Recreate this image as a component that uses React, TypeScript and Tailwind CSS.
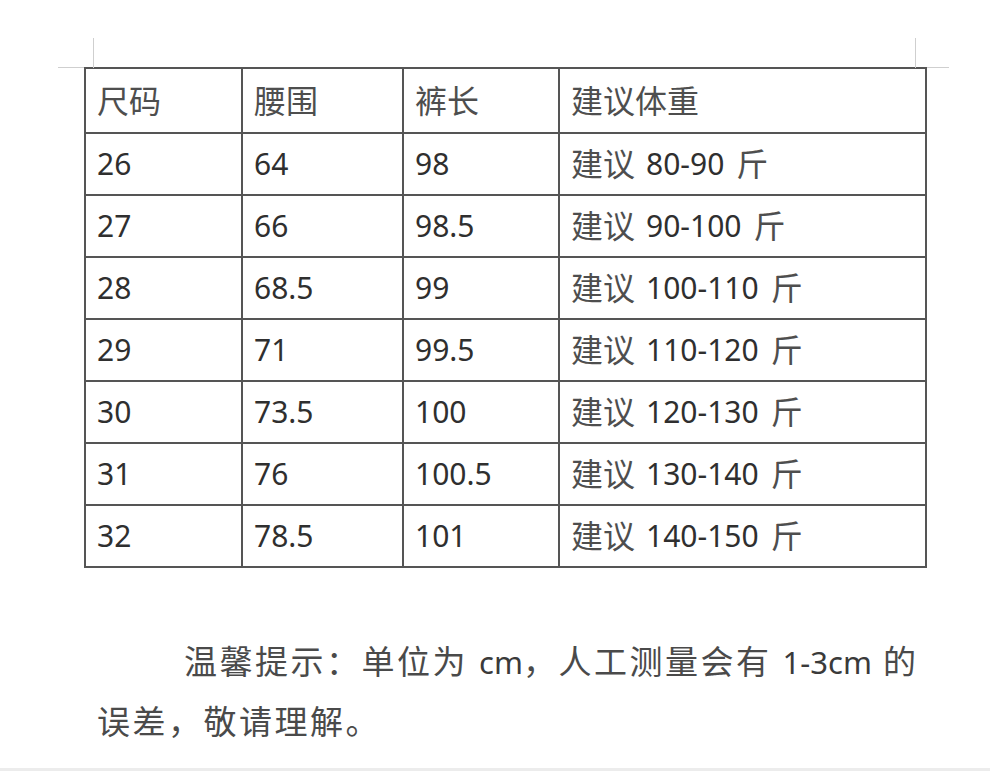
import React from "react";

const FONT = { fontFamily: '"Noto Sans", "Noto Sans CJK SC", sans-serif' };

// size chart rows: size, waist, length, weight range
const HEAD = ["尺码", "腰围", "裤长", "建议体重"];
const ROWS: [string, string, string, string][] = [
    ["26", "64", "98", "80-90"],
    ["27", "66", "98.5", "90-100"],
    ["28", "68.5", "99", "100-110"],
    ["29", "71", "99.5", "110-120"],
    ["30", "73.5", "100", "120-130"],
    ["31", "76", "100.5", "130-140"],
    ["32", "78.5", "101", "140-150"],
];

const COLS = ["w-[157px]", "w-[161px]", "w-[156px]", "w-[367px]"];

function Cjk({ children }: { children: string }) {
    return <span className="text-[32px] text-[#4e4e4e]">{children}</span>;
}

function Cell({ col, tall, children }: { col: number; tall?: boolean; children: React.ReactNode }) {
    return (
        <div
            className={`${COLS[col]} ${tall ? "h-[65px]" : "h-[62px]"} flex items-center border-b-2 border-r-2 border-[#555] pl-[11px] text-[30px] leading-none text-[#2f2f2f]`}
        >
            {children}
        </div>
    );
}

export default function App() {
    return (
        <div className="relative flex h-[771px] w-[990px] flex-col overflow-hidden bg-white" style={FONT}>
            {/* crop marks */}
            <div className="absolute left-[93px] top-[38px] h-[30px] w-px bg-[#cfcfcf]" />
            <div className="absolute left-[58px] top-[67px] h-px w-[26px] bg-[#cfcfcf]" />
            <div className="absolute left-[915px] top-[38px] h-[30px] w-px bg-[#cfcfcf]" />
            <div className="absolute left-[927px] top-[67px] h-px w-[22px] bg-[#cfcfcf]" />

            <div className="pl-[84px] pt-[67px]">
                <div className="flex w-[843px] flex-col border-l-2 border-t-2 border-[#555]">
                    <div className="flex">
                        {HEAD.map((h, i) => (
                            <Cell key={h} col={i} tall>
                                <Cjk>{h}</Cjk>
                            </Cell>
                        ))}
                    </div>
                    {ROWS.map((r) => (
                        <div key={r[0]} className="flex">
                            <Cell col={0}>{r[0]}</Cell>
                            <Cell col={1}>{r[1]}</Cell>
                            <Cell col={2}>{r[2]}</Cell>
                            <Cell col={3}>
                                <Cjk>建议</Cjk>
                                <span className="ml-[11px]">{r[3]}</span>
                                <span className="ml-[12px]">
                                    <Cjk>斤</Cjk>
                                </span>
                            </Cell>
                        </div>
                    ))}
                </div>
            </div>

            <div className="mt-[64px] pl-[97px] text-[33px] leading-[60px] tracking-[2.5px] text-[#4a4a4a]">
                <div className="pl-[87px]">
                    温馨提示：单位为 <span className="text-[31px] tracking-normal text-[#3a3a3a]">cm</span>，人工测量会有{" "}
                    <span className="text-[31px] tracking-normal text-[#3a3a3a]">1-3cm</span> 的
                </div>
                <div>误差，敬请理解。</div>
            </div>

            <div className="mt-auto h-[3px] bg-[#ececec]" />
        </div>
    );
}
